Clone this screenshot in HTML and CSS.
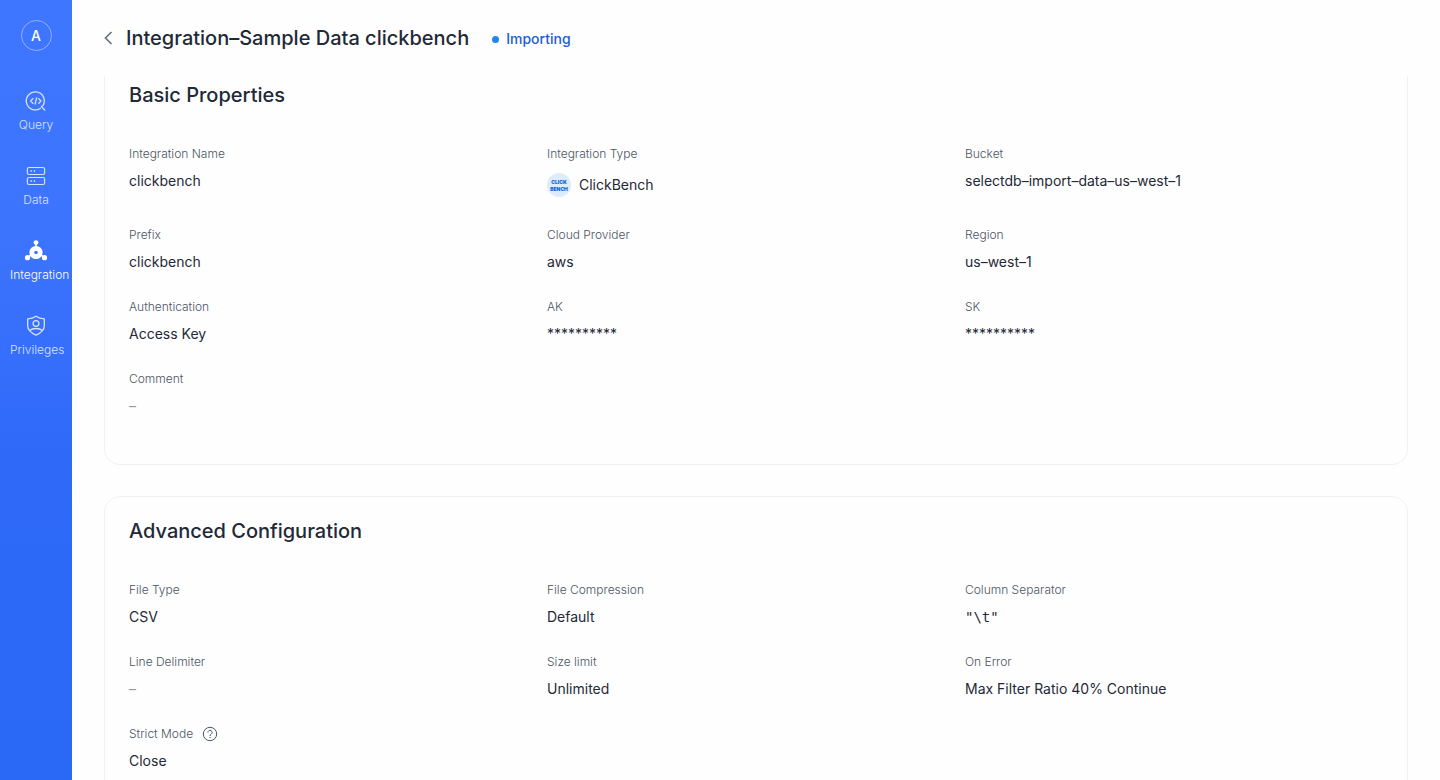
FILE: index.html
```html
<!DOCTYPE html>
<html lang="en">
<head>
<meta charset="utf-8">
<title>Integration – Sample Data clickbench</title>
<link rel="stylesheet" href="styles.css">
</head>
<body>
<div class="app">
  <aside class="sidebar">
    <button class="avatar" type="button">A</button>
    <nav class="nav">
      <a class="nav-item" href="#query">
        <svg class="nav-icon" viewBox="0 0 24 24" fill="none" stroke="currentColor" stroke-width="1.3" stroke-linecap="round" stroke-linejoin="round"><path d="M16.500 19.200A9 9 0 1 1 19 16.500l-1.500 1.100 3.200 3.400"/><path d="M8.900 9.600 6.700 12l2.200 2.400M14.700 9.600l2.200 2.400-2.200 2.400M12.600 9l-1.500 6"/></svg>
        <span>Query</span>
      </a>
      <a class="nav-item" href="#data">
        <svg class="nav-icon" viewBox="0 0 24 24" fill="none" stroke="currentColor" stroke-width="1.2"><rect x="3.4" y="3.500" width="17.2" height="7" rx="1.5"/><rect x="3.4" y="13.500" width="17.2" height="7" rx="1.5"/><path d="M6.500 7h1.400M9.700 7h1.400M6.500 17h1.400M9.700 17h1.400" stroke-width="1.4"/></svg>
        <span>Data</span>
      </a>
      <a class="nav-item nav-item-active" href="#integration">
        <svg class="nav-icon" viewBox="0 0 24 24" fill="none" stroke="currentColor"><circle cx="12" cy="13.500" r="4.200" stroke-width="4.800"/><path d="M12 9V4M8 15.500l-4 2.500M16 15.500l4 2.500" stroke-width="1.500"/><circle cx="12" cy="3.600" r="2.400" fill="currentColor" stroke="none"/><circle cx="3.500" cy="18.700" r="2.600" fill="currentColor" stroke="none"/><circle cx="20.500" cy="18.700" r="2.600" fill="currentColor" stroke="none"/></svg>
        <span>Integration</span>
      </a>
      <a class="nav-item" href="#privileges">
        <svg class="nav-icon" viewBox="0 0 24 24" fill="none" stroke="currentColor" stroke-width="1.3" stroke-linejoin="round"><path d="M12 2.200c2.400 1.700 5.200 2.500 8.300 2.600v7.200c0 4-3.500 6.900-8.300 9.200-4.800-2.300-8.300-5.200-8.300-9.200V4.800c3.100-.1 5.900-.9 8.300-2.600z"/><circle cx="12" cy="9.500" r="2.900"/><path d="M5.600 16.500c1.500-1.300 3.800-2 6.400-2s4.900.7 6.400 2"/></svg>
        <span>Privileges</span>
      </a>
    </nav>
  </aside>
  <main class="main">
    <header class="header">
      <button class="back" type="button" aria-label="Back"><svg class="back-icon" viewBox="0 0 10 14" fill="none" stroke="currentColor" stroke-width="1.700"><path d="M7.500 1 1.500 7l6 6"/></svg></button>
      <h1 class="title">Integration–Sample Data clickbench</h1>
      <span class="status"><span class="status-dot"></span>Importing</span>
    </header>
    <section class="card card-scrolled">
      <h2 class="card-title">Basic Properties</h2>
      <dl class="props">
        <div class="prop"><dt>Integration Name</dt><dd>clickbench</dd></div>
        <div class="prop"><dt>Integration Type</dt><dd class="with-logo"><svg class="logo" viewBox="0 0 24 24"><circle cx="12" cy="12" r="12" fill="#dcecfb"/><text class="logo-text" x="12" y="11" text-anchor="middle">CLICK</text><text class="logo-text" x="12" y="18" text-anchor="middle">BENCH</text></svg>ClickBench</dd></div>
        <div class="prop"><dt>Bucket</dt><dd>selectdb–import–data–us–west–1</dd></div>
        <div class="prop"><dt>Prefix</dt><dd>clickbench</dd></div>
        <div class="prop"><dt>Cloud Provider</dt><dd>aws</dd></div>
        <div class="prop"><dt>Region</dt><dd>us–west–1</dd></div>
        <div class="prop"><dt>Authentication</dt><dd>Access Key</dd></div>
        <div class="prop"><dt>AK</dt><dd>**********</dd></div>
        <div class="prop"><dt>SK</dt><dd>**********</dd></div>
        <div class="prop"><dt>Comment</dt><dd class="empty">–</dd></div>
      </dl>
    </section>
    <section class="card">
      <h2 class="card-title">Advanced Configuration</h2>
      <dl class="props">
        <div class="prop"><dt>File Type</dt><dd>CSV</dd></div>
        <div class="prop"><dt>File Compression</dt><dd>Default</dd></div>
        <div class="prop"><dt>Column Separator</dt><dd class="code">"\t"</dd></div>
        <div class="prop"><dt>Line Delimiter</dt><dd class="empty">–</dd></div>
        <div class="prop"><dt>Size limit</dt><dd>Unlimited</dd></div>
        <div class="prop"><dt>On Error</dt><dd>Max Filter Ratio 40% Continue</dd></div>
        <div class="prop"><dt class="with-help">Strict Mode <svg class="help" viewBox="0 0 16 16" fill="none" stroke="currentColor" stroke-width="1"><circle cx="8" cy="8" r="6.700"/><path d="M5.900 6.500a2.100 2.100 0 1 1 3.300 1.700C8.400 8.700 8 9.100 8 10M8 11v1.200"/></svg></dt><dd>Close</dd></div>
      </dl>
    </section>
  </main>
</div>
</body>
</html>
```
FILE: styles.css
```css
* { box-sizing: border-box; }
body {
  margin: 0;
  background: #fefefe;
  color: #1f2937;
  font: 14px/22px Inter, "Liberation Sans", sans-serif;
}
.app { display: flex; height: 100vh; overflow: hidden; }
.sidebar {
  width: 72px;
  flex: none;
  display: flex;
  flex-direction: column;
  align-items: center;
  gap: 38px;
  padding-top: 20px;
  background: linear-gradient(#3f76ff 0%, #3d74fd 30%, #2e69f8 60%, #2a68f6 100%);
}
.avatar {
  width: 31px;
  height: 31px;
  padding: 0;
  border: 1px solid #8fb2ff;
  border-radius: 50%;
  background: none;
  color: #fff;
  font: 500 14px/29px Inter, sans-serif;
}
.nav { display: flex; flex-direction: column; gap: 29px; width: 100%; padding: 0 10px; }
.nav-item {
  display: flex;
  flex-direction: column;
  gap: 2px;
  color: #d6e2fe;
  font-size: 12px;
  font-weight: 300;
  line-height: 20px;
  text-align: center;
  text-decoration: none;
  white-space: nowrap;
}
.nav-item-active { color: #fff; }
.nav-icon { width: 24px; height: 24px; align-self: center; }
.main { flex: 1; min-width: 0; padding: 0 32px; }
.header { display: flex; align-items: center; height: 76px; }
.back { width: 22px; height: 24px; padding: 0; border: 0; background: none; color: #6b7280; text-align: left; }
.back-icon { display: block; width: 10px; height: 14px; }
.title, .card-title { margin: 0; font-size: 20px; line-height: 28px; font-weight: 500; }
.status { display: flex; align-items: center; gap: 7px; margin-left: 23px; padding-top: 2px; color: #1a5fd0; font-weight: 500; }
.status-dot { width: 7px; height: 7px; border-radius: 50%; background: #2186e8; }
.card { margin-bottom: 31px; padding: 20px 24px 23px; border: 1px solid #f0f1f3; border-radius: 16px; }
.card-scrolled { padding-top: 5px; border-top: 0; border-radius: 0 0 16px 16px; }
.props { display: grid; grid-template-columns: repeat(3, 1fr); margin: 35px 0 0; }
.prop { padding-bottom: 24px; }
.prop dt { color: #4b5563; font-size: 12px; font-weight: 300; line-height: 20px; }
.prop dd { margin: 6px 0 0; }
.prop .with-logo { display: flex; align-items: center; gap: 8px; height: 29px; margin-bottom: 2px; }
.logo { width: 24px; height: 24px; }
.logo-text { font: 900 5px Inter, sans-serif; fill: #1265dd; }
.prop .empty { color: #9097a3; }
.prop .code { font-family: "DejaVu Sans Mono", monospace; }
.prop .with-help { display: flex; align-items: center; gap: 9px; }
.help { width: 16px; height: 16px; }
```
